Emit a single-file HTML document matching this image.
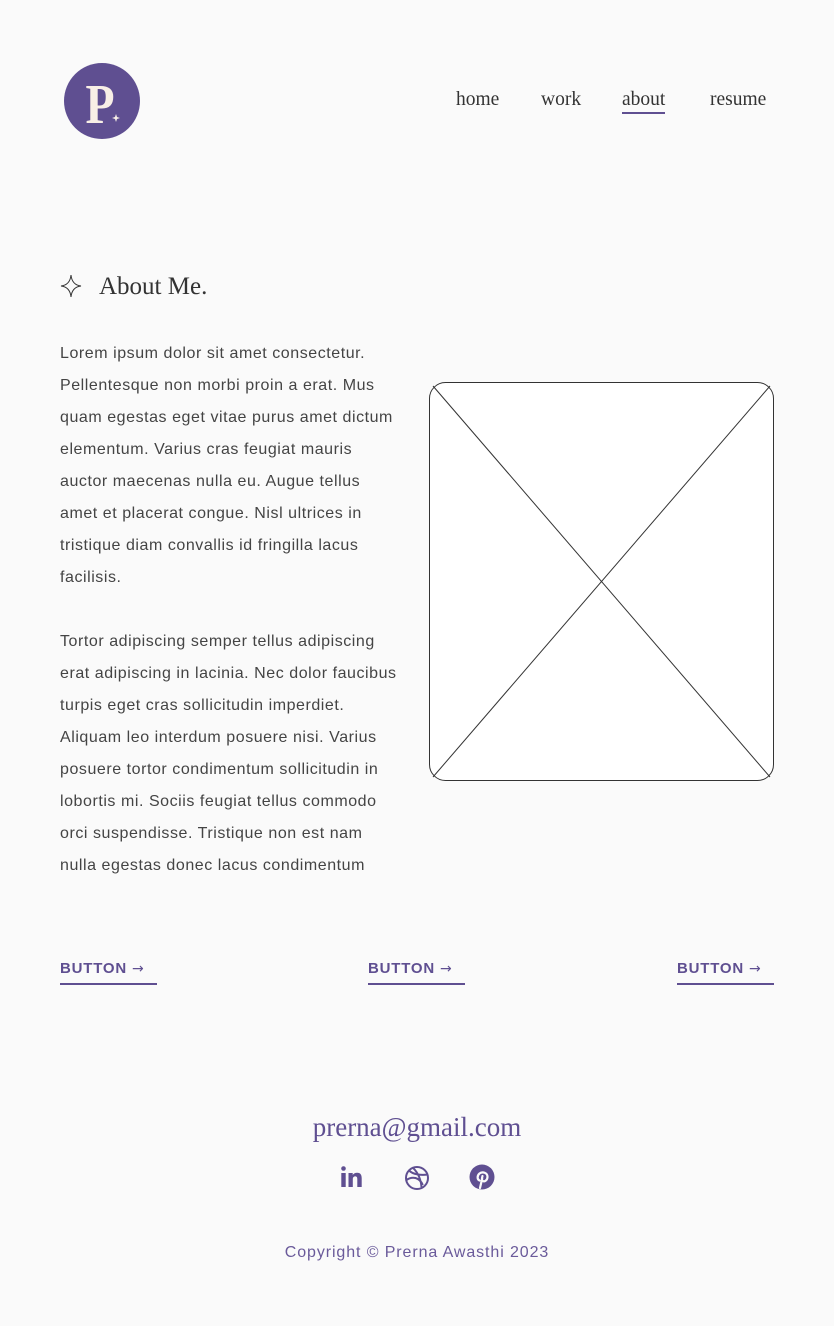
<!DOCTYPE html>
<html><head><style>
*{margin:0;padding:0;box-sizing:border-box}
body{width:834px;height:1326px;background:#fafafa;position:relative;font-family:"Liberation Sans",sans-serif;color:#333;overflow:hidden}
.abs{position:absolute}
.nav a{position:absolute;top:89px;font-family:"Liberation Serif",serif;font-size:19.5px;color:#333;text-decoration:none;line-height:22px}
p.body{position:absolute;left:60px;width:370px;font-size:16px;line-height:32px;color:#444;white-space:nowrap;letter-spacing:0.55px}
.btn{position:absolute;top:959px;font-size:15px;font-weight:bold;color:#5f4f91;letter-spacing:0.8px;line-height:20px;border-bottom:2px solid #5f4f91;width:97px;height:26px}
.btn span{font-family:"DejaVu Sans",sans-serif;font-weight:normal;font-size:14px;letter-spacing:0}
</style></head><body>
<svg class="abs" style="left:64px;top:63px" width="76" height="76" viewBox="0 0 76 76">
<circle cx="38" cy="38" r="38" fill="#5f4f91"/>
<text x="36" y="60" text-anchor="middle" font-family="Liberation Serif,serif" font-size="56" font-weight="bold" fill="#f8efe6" transform="translate(36 0) scale(0.85 1) translate(-36 0)">P</text>
<path d="M52 51 l1 3 3 1 -3 1 -1 3 -1 -3 -3 -1 3 -1z" fill="#f8efe6"/>
</svg>
<div class="nav">
<a style="left:456px">home</a>
<a style="left:541px">work</a>
<a style="left:622px;border-bottom:2px solid #5f4f91;padding-bottom:1px">about</a>
<a style="left:710px">resume</a>
</div>
<svg class="abs" style="left:60px;top:274px" width="22" height="24" viewBox="0 0 22 24"><path d="M11 1 Q12 11 21 12 Q12 13 11 23 Q10 13 1 12 Q10 11 11 1z" fill="none" stroke="#333" stroke-width="1"/></svg>
<div class="abs" style="left:99px;top:273px;font-family:'Liberation Serif',serif;font-size:25px;color:#333">About Me.</div>
<p class="body" style="top:338px">Lorem ipsum dolor sit amet consectetur.<br>Pellentesque non morbi proin a erat. Mus<br>quam egestas eget vitae purus amet dictum<br>elementum. Varius cras feugiat mauris<br>auctor maecenas nulla eu. Augue tellus<br>amet et placerat congue. Nisl ultrices in<br>tristique diam convallis id fringilla lacus<br>facilisis.</p>
<p class="body" style="top:626px">Tortor adipiscing semper tellus adipiscing<br>erat adipiscing in lacinia. Nec dolor faucibus<br>turpis eget cras sollicitudin imperdiet.<br>Aliquam leo interdum posuere nisi. Varius<br>posuere tortor condimentum sollicitudin in<br>lobortis mi. Sociis feugiat tellus commodo<br>orci suspendisse. Tristique non est nam<br>nulla egestas donec lacus condimentum</p>
<svg class="abs" style="left:429px;top:382px" width="345" height="399" viewBox="0 0 345 399">
<rect x="0.5" y="0.5" width="344" height="398" rx="16" fill="#fff" stroke="#333"/>
<line x1="4" y1="4" x2="341" y2="395" stroke="#333"/><line x1="341" y1="4" x2="4" y2="395" stroke="#333"/>
</svg>
<div class="btn" style="left:60px">BUTTON <span>→</span></div>
<div class="btn" style="left:368px">BUTTON <span>→</span></div>
<div class="btn" style="left:677px">BUTTON <span>→</span></div>
<div class="abs" style="left:0;width:834px;top:1112px;text-align:center;font-family:'Liberation Serif',serif;font-size:27px;color:#5f4f91">prerna@gmail.com</div>
<svg class="abs" style="left:340px;top:1165px" width="24" height="24" viewBox="0 0 24 24"><circle cx="3.5" cy="3.5" r="2.3" fill="#5f4f91"/><rect x="1.3" y="8" width="4.4" height="14" fill="#5f4f91"/><path d="M8.5 8h4.2v2c.8-1.4 2.4-2.3 4.4-2.3 3.6 0 4.6 2.3 4.6 5.6V22h-4.4v-7.8c0-1.7-.4-2.8-2-2.8-1.7 0-2.5 1.2-2.5 2.8V22H8.5z" fill="#5f4f91"/></svg>
<svg class="abs" style="left:404px;top:1165px" width="26" height="26" viewBox="0 0 26 26" fill="none" stroke="#5f4f91" stroke-width="2"><circle cx="13" cy="13" r="11"/><path d="M5 5.5c4 4 12 5 19 4M9 2.8c5 5 8 12 8.5 19.5M2.3 15c6-4 13-3 16.5 5"/></svg>
<svg class="abs" style="left:469px;top:1164px" width="26" height="26" viewBox="0 0 26 26"><circle cx="13" cy="13" r="12.5" fill="#5f4f91"/><path d="M11 24l2.2-9.5M10.5 16.5c-2.5-1-2.5-5 0-7 3-2.3 8-.8 8 3.3 0 3.5-3 5.5-5 4-1-.8-.6-2.7 0-4.8" fill="none" stroke="#fafafa" stroke-width="2.2" stroke-linecap="round"/></svg>
<div class="abs" style="left:0;width:834px;top:1244px;text-align:center;font-size:16px;color:#6a5a9a;letter-spacing:0.9px">Copyright © Prerna Awasthi 2023</div>
</body></html>
